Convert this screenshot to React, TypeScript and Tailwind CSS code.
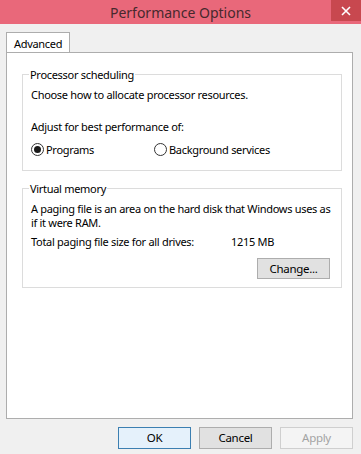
import React from "react";

const font = { fontFamily: '"Noto Sans", "Open Sans", sans-serif' };

const Radio = ({ checked, label }: { checked?: boolean; label: string }) => (
  <div className="flex items-center">
    <span className="flex h-[13px] w-[13px] items-center justify-center rounded-full border border-[#333333] bg-white">
      {checked && <span className="h-[7px] w-[7px] rounded-full bg-[#1a1a1a]" />}
    </span>
    <span className="ml-[2px]">{label}</span>
  </div>
);

const Group = ({
  title,
  className,
  children,
}: {
  title: string;
  className?: string;
  children: React.ReactNode;
}) => (
  <div className={`relative border border-[#dcdcdc] ${className ?? ""}`}>
    <span className="absolute -top-[8px] left-[6px] bg-white px-[1px] leading-[15px]">
      {title}
    </span>
    {children}
  </div>
);

const Btn = ({
  children,
  variant,
}: {
  children: React.ReactNode;
  variant?: "default" | "disabled";
}) => {
  const base =
    "flex h-[22px] w-[73px] items-center justify-center border text-[11.5px]";
  const look =
    variant === "default"
      ? "border-[#3c7fb1] bg-[#e5f1fb] text-black"
      : variant === "disabled"
      ? "border-[#cfcfcf] bg-[#f4f4f4] text-[#a3a3a3]"
      : "border-[#adadad] bg-[#e1e1e1] text-black";
  return <button className={`${base} ${look}`}>{children}</button>;
};

export default function App() {
  return (
    <div
      className="flex h-[454px] w-[361px] flex-col bg-[#f0f0f0] text-[11px] tracking-[-0.3px] text-black"
      style={font}
    >
      {/* Title bar */}
      <div className="relative flex h-[24px] items-center justify-center bg-[#e9687a]">
        <span className="text-[14px] tracking-normal text-[#46292d]">Performance Options</span>
        <div className="absolute right-0 top-0 flex h-[21px] w-[30px] items-center justify-center bg-[#c8484f]">
          <svg width="10" height="10" viewBox="0 0 10 10">
            <path d="M1 1 L9 9 M9 1 L1 9" stroke="#ffffff" strokeWidth="1.6" />
          </svg>
        </div>
      </div>

      {/* Tab strip */}
      <div className="ml-[6px] mt-[8px] flex">
        <div className="-mb-px flex h-[21px] w-[64px] items-center border border-b-0 border-[#adadad] bg-white pl-[7px] leading-[15px]">
          Advanced
        </div>
      </div>

      {/* Tab panel */}
      <div className="ml-[6px] h-[367px] w-[347px] border border-[#adadad] bg-white px-[15px] pt-[21px]">
        <Group title="Processor scheduling" className="h-[97px] w-[320px] px-[8px] pt-[12px]">
          <div className="leading-[15px]">Choose how to allocate processor resources.</div>
          <div className="mt-[17px] leading-[15px]">Adjust for best performance of:</div>
          <div className="mt-[8px] flex leading-[15px]">
            <div className="w-[123px]">
              <Radio checked label="Programs" />
            </div>
            <Radio label="Background services" />
          </div>
        </Group>

        <Group title="Virtual memory" className="mt-[17px] h-[100px] w-[320px] px-[8px] pt-[13px]">
          <div className="leading-[14px] whitespace-nowrap">
            A paging file is an area on the hard disk that Windows uses as
            <br />
            if it were RAM.
          </div>
          <div className="mt-[4px] flex leading-[15px]">
            <span className="w-[200px]">Total paging file size for all drives:</span>
            <span>1215 MB</span>
          </div>
          <div className="mt-[9px] flex justify-end pr-[3px]">
            <button className="flex h-[21px] w-[73px] items-center justify-center border border-[#adadad] bg-[#e1e1e1] text-[11.5px]">
              Change...
            </button>
          </div>
        </Group>
      </div>

      {/* Dialog buttons */}
      <div className="mt-[8px] flex justify-end gap-[8px] pr-[8px]">
        <Btn variant="default">OK</Btn>
        <Btn>Cancel</Btn>
        <Btn variant="disabled">Apply</Btn>
      </div>
    </div>
  );
}
